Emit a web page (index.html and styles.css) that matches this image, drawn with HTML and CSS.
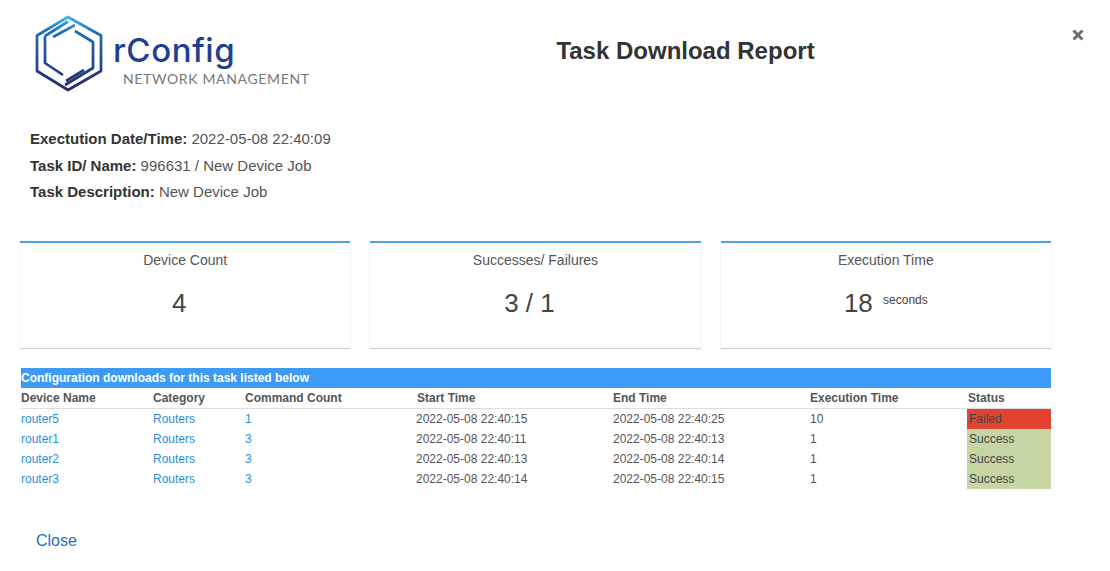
FILE: index.html
```html
<!DOCTYPE html>
<html lang="en">
<head>
<meta charset="utf-8">
<title>Task Download Report</title>
<link rel="stylesheet" href="styles.css">
</head>
<body>
<main class="report">
  <header class="top">
    <div class="logo">
      <svg class="logo-mark" width="80" height="86" viewBox="30 10 80 86" aria-hidden="true">
        <defs>
          <linearGradient id="hex" gradientUnits="userSpaceOnUse" x1="68" y1="15" x2="68" y2="92">
            <stop offset="0" stop-color="#45bdf0"/>
            <stop offset="0.22" stop-color="#1f6db5"/>
            <stop offset="0.55" stop-color="#1e4f98"/>
            <stop offset="1" stop-color="#2a2262"/>
          </linearGradient>
        </defs>
        <g fill="none" stroke="url(#hex)" stroke-width="2.7" stroke-linejoin="round">
          <path d="M68 17 L101 35.5 V71 L68 90 L37 71 V35.5 Z"/>
          <path d="M45 36 V63 L63 75"/>
          <path d="M45 36 L68 21.5"/>
          <path d="M53 37 L75 25"/>
          <path d="M75 31 L93 42 V68 L65 85"/>
          <path d="M84 70 L66 81"/>
        </g>
      </svg>
      <div class="logo-text">
        <span class="logo-name">rConfig</span>
        <span class="logo-sub">NETWORK MANAGEMENT</span>
      </div>
    </div>
    <h1 class="title">Task Download Report</h1>
    <button class="dismiss" type="button" aria-label="Close">
      <svg width="12" height="12" viewBox="0 0 12 12" aria-hidden="true"><path d="M1.5 1.5 L10.5 10.5 M10.5 1.5 L1.5 10.5" stroke="#6b6f76" stroke-width="3"/></svg>
    </button>
  </header>

  <section class="meta">
    <p><b>Exectution Date/Time:</b> 2022-05-08 22:40:09</p>
    <p><b>Task ID/ Name:</b> 996631 / New Device Job</p>
    <p><b>Task Description:</b> New Device Job</p>
  </section>

  <section class="cards">
    <article class="card">
      <h2 class="card-title">Device Count</h2>
      <div class="card-value offset">4</div>
    </article>
    <article class="card">
      <h2 class="card-title">Successes/ Failures</h2>
      <div class="card-value offset">3 / 1</div>
    </article>
    <article class="card">
      <h2 class="card-title">Execution Time</h2>
      <div class="card-value">18 <small class="unit">seconds</small></div>
    </article>
  </section>

  <table class="tasks">
    <colgroup>
      <col class="c-name"><col class="c-cat"><col class="c-count"><col class="c-time"><col class="c-time"><col class="c-exec"><col class="c-status">
    </colgroup>
    <thead>
      <tr class="caption-row"><th colspan="7">Configuration downloads for this task listed below</th></tr>
      <tr class="head-row">
        <th>Device Name</th><th>Category</th><th>Command Count</th><th class="nudge">Start Time</th><th>End Time</th><th>Execution Time</th><th class="nudge">Status</th>
      </tr>
    </thead>
    <tbody>
      <tr><td><a href="#">router5</a></td><td><a href="#">Routers</a></td><td><a href="#">1</a></td><td>2022-05-08 22:40:15</td><td>2022-05-08 22:40:25</td><td>10</td><td class="status failed">Failed</td></tr>
      <tr><td><a href="#">router1</a></td><td><a href="#">Routers</a></td><td><a href="#">3</a></td><td>2022-05-08 22:40:11</td><td>2022-05-08 22:40:13</td><td>1</td><td class="status ok">Success</td></tr>
      <tr><td><a href="#">router2</a></td><td><a href="#">Routers</a></td><td><a href="#">3</a></td><td>2022-05-08 22:40:13</td><td>2022-05-08 22:40:14</td><td>1</td><td class="status ok">Success</td></tr>
      <tr><td><a href="#">router3</a></td><td><a href="#">Routers</a></td><td><a href="#">3</a></td><td>2022-05-08 22:40:14</td><td>2022-05-08 22:40:15</td><td>1</td><td class="status ok">Success</td></tr>
    </tbody>
  </table>

  <a class="close-link" href="#">Close</a>
</main>
</body>
</html>
```
FILE: styles.css
```css
* { box-sizing: border-box; }
html, body { margin: 0; padding: 0; background: #fff; }
body {
  font-family: "Liberation Sans", Arial, sans-serif;
  color: #333;
  font-size: 14px;
}
.report { padding: 0 0 0 20px; width: 1110px; height: 571px; overflow: hidden; }

.top { display: flex; align-items: flex-start; height: 110px; padding-top: 10px; }
.logo { display: flex; align-items: flex-start; width: 290px; margin-left: 10px; flex: none; }
.logo-mark { display: block; flex: none; }
.logo-text { display: flex; flex-direction: column; margin-left: 3px; }
.logo-name {
  font-family: Inter, sans-serif;
  font-size: 33px;
  font-weight: 500;
  line-height: 40px;
  letter-spacing: 0.6px;
  color: #1f3f8f;
  margin-top: 20px;
}
.logo-sub {
  font-family: Lato, sans-serif;
  font-size: 14px;
  line-height: 16px;
  letter-spacing: 0.65px;
  color: #77787b;
  margin-left: 10px;
  margin-top: 1px;
  white-space: nowrap;
}
.title {
  margin: 26px 0 0 0;
  width: 731px;
  flex: none;
  text-align: center;
  font-size: 24px;
  line-height: 30px;
  font-weight: 700;
  color: #333;
}
.dismiss {
  border: 0;
  background: none;
  padding: 0;
  margin: 19px 0 0 21px;
  width: 12px;
  height: 12px;
  line-height: 0;
  flex: none;
}

.meta { margin: 16px 0 0 10px; height: 88px; }
.meta p { margin: 0; line-height: 26.5px; font-size: 15px; color: #555; }
.meta b { color: #333; }

.cards { display: flex; gap: 20px; margin-top: 27px; width: 1031px; }
.card {
  flex: 1 1 0;
  height: 107px;
  border-top: 2px solid #4aa3df;
  box-shadow: 0 1px 1px rgba(0,0,0,.18), 0 0 2px rgba(0,0,0,.05);
  text-align: center;
  background: #fff;
}
.card-title { margin: 8px 0 0 0; font-size: 14px; line-height: 18px; font-weight: 400; color: #555; }
.card-value { margin-top: 18px; font-size: 26px; line-height: 32px; color: #444; }
.card-value.offset { padding-right: 12px; }
.unit { font-size: 12px; vertical-align: 8px; line-height: 0; margin-left: 3px; }

.tasks {
  border-collapse: separate;
  border-spacing: 0;
  table-layout: fixed;
  width: 1030px;
  margin: 20px 0 0 1px;
  font-size: 12px;
}
.c-name { width: 132px; }
.c-cat { width: 92px; }
.c-count { width: 171px; }
.c-time { width: 197px; }
.c-exec { width: 157px; }
.c-status { width: 84px; }
.tasks th, .tasks td { padding: 0; text-align: left; height: 20px; line-height: 20px; white-space: nowrap; }
.caption-row th { background: #3d9bf7; color: #fff; font-weight: 700; }
.head-row th { color: #555; font-weight: 700; border-bottom: 1px solid #ddd; height: 21px; }
.head-row th.nudge { padding-left: 1px; }
.tasks td { color: #555; }
.tasks a { color: #2b8fd8; text-decoration: none; }
.tasks td.status { padding-left: 2px; color: #444; }
.failed { background: #e24330; }
.ok { background: #c5d5a3; }

.close-link { display: inline-block; margin: 34px 0 0 16px; font-size: 16px; line-height: 36px; color: #1c6fc4; text-decoration: none; }
```
